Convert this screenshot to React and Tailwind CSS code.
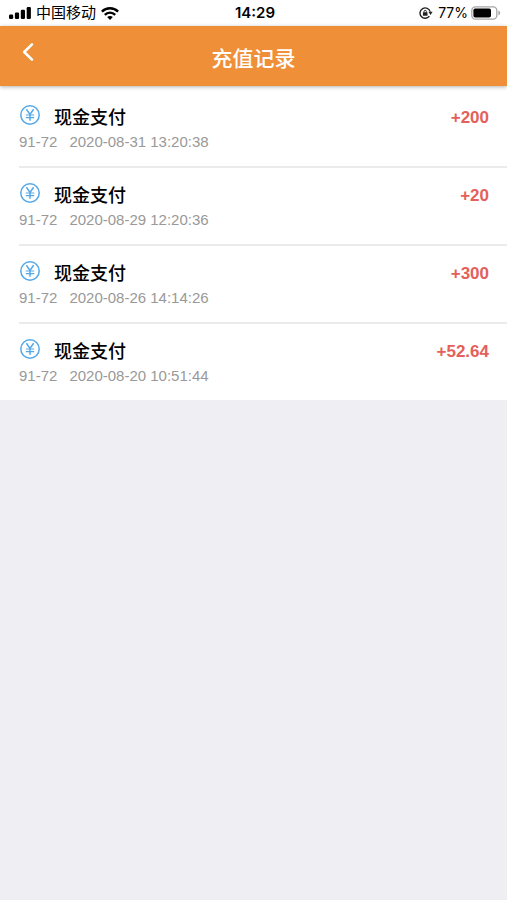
const records = [
  { id: 1, time: "2020-08-31 13:20:38", amount: "+200" },
  { id: 2, time: "2020-08-29 12:20:36", amount: "+20" },
  { id: 3, time: "2020-08-26 14:14:26", amount: "+300" },
  { id: 4, time: "2020-08-20 10:51:44", amount: "+52.64" },
];

function SignalIcon() {
  return (
    <svg className="h-3 w-[22px]" viewBox="0 0 22 12" fill="#000" aria-hidden="true">
      <rect x="0" y="7.6" width="4.2" height="4.4" rx="1.2" />
      <rect x="5.9" y="5.6" width="4.2" height="6.4" rx="1.2" />
      <rect x="11.8" y="2.8" width="4.2" height="9.2" rx="1.2" />
      <rect x="17.7" y="0" width="4.2" height="12" rx="1.2" />
    </svg>
  );
}

function WifiIcon() {
  return (
    <svg className="h-[13px] w-[18px]" viewBox="0 0 18 13" fill="none" stroke="#000" strokeWidth="2.4" aria-hidden="true">
      <path d="M0.9 4.6C5.4 0.1 12.6 0.1 17.1 4.6" />
      <path d="M3.8 7.8C6.8 4.9 11.2 4.9 14.2 7.8" />
      <path d="M9 13L6.2 10.1C7.8 8.7 10.2 8.7 11.8 10.1Z" fill="#000" stroke="none" />
    </svg>
  );
}

function RotationLockIcon() {
  return (
    <svg className="h-3 w-[14px]" viewBox="0 0 14 12" fill="none" stroke="#222" aria-hidden="true">
      <path d="M10.4 9.2A5.2 5.2 0 1 1 11.2 4.6" strokeWidth="1.4" />
      <path d="M9.4 4.8H13.6L11.6 8Z" fill="#222" stroke="none" />
      <rect x="3.9" y="5.3" width="4.6" height="3.5" rx="0.5" fill="#222" stroke="none" />
      <path d="M5 5.6V4.6a1.2 1.2 0 0 1 2.4 0v1" strokeWidth="1" />
    </svg>
  );
}

function BatteryIcon() {
  return (
    <svg className="h-[14px] w-[30px]" viewBox="0 0 30 14" fill="none" aria-hidden="true">
      <rect x="0.8" y="0.8" width="25" height="12.4" rx="3.6" stroke="#a6a6a6" strokeWidth="1.3" />
      <rect x="2.4" y="2.4" width="17.6" height="9.2" rx="1.8" fill="#000" />
      <path d="M27.4 4.6C29.8 5.4 29.8 8.6 27.4 9.4Z" fill="#a6a6a6" />
    </svg>
  );
}

function YuanIcon() {
  return (
    <svg className="size-5 shrink-0" viewBox="0 0 20 20" fill="none" stroke="#55a8e8" aria-hidden="true">
      <circle cx="10" cy="10" r="9.2" strokeWidth="1.5" />
      <path d="M6.4 4.2L10 9.4L13.6 4.2M10 9.2V15.8" strokeWidth="1.5" />
      <path d="M5.8 10H14.2M5.8 12.6H14.2" strokeWidth="1.2" />
    </svg>
  );
}

function StatusBar() {
  return (
    <div className="grid h-[26px] grid-cols-[1fr_auto_1fr] items-center bg-white pr-1.5 pl-[9px] text-black">
      <div className="flex items-center gap-[5px]">
        <SignalIcon />
        <span className="text-[15px] leading-5">中国移动</span>
        <WifiIcon />
      </div>
      <span className="font-['Inter',sans-serif] text-[15px] leading-5 font-semibold">14:29</span>
      <div className="flex items-center justify-end gap-[3px]">
        <RotationLockIcon />
        <span className="pl-0.5 font-['Inter',sans-serif] text-sm leading-5">77%</span>
        <BatteryIcon />
      </div>
    </div>
  );
}

export default function App() {
  return (
    <div className="min-h-screen bg-[#eeeef3] font-['Liberation_Sans','Noto_Sans_CJK_SC',sans-serif]">
      <StatusBar />
      <header className="relative grid h-[60px] grid-cols-[1fr_auto_1fr] bg-[#ef8f37] text-white shadow-[0_1px_4px_rgba(0,0,0,0.3)]">
        <button type="button" aria-label="返回" className="flex h-[52px] w-14 items-center justify-center">
          <svg className="h-5 w-3" viewBox="0 0 12 20" fill="none" stroke="currentColor" strokeWidth="2.6" strokeLinecap="round" strokeLinejoin="round" aria-hidden="true">
            <path d="M10 2.4L2.2 10L10 17.6" />
          </svg>
        </button>
        <h1 className="pt-[3px] text-[21px] leading-[60px] font-medium">充值记录</h1>
      </header>
      <main>
        <ul className="bg-white pt-1 pl-[19px]">
          {records.map((record) => (
            <li key={record.id} className="flex items-start justify-between border-b-2 border-[#ebebed] pt-[15px] pr-[18px] pb-3.5 last:border-b-0">
              <div>
                <div className="flex items-start gap-[14px] pl-px">
                  <YuanIcon />
                  <h2 className="text-lg leading-[26px] font-medium text-black">现金支付</h2>
                </div>
                <p className="flex gap-3 pt-px text-[15px] leading-5 text-[#999]">
                  <span>91-72</span>
                  <time>{record.time}</time>
                </p>
              </div>
              <span className="text-[17px] leading-[26px] font-bold text-[#e4605a]">{record.amount}</span>
            </li>
          ))}
        </ul>
      </main>
    </div>
  );
}
